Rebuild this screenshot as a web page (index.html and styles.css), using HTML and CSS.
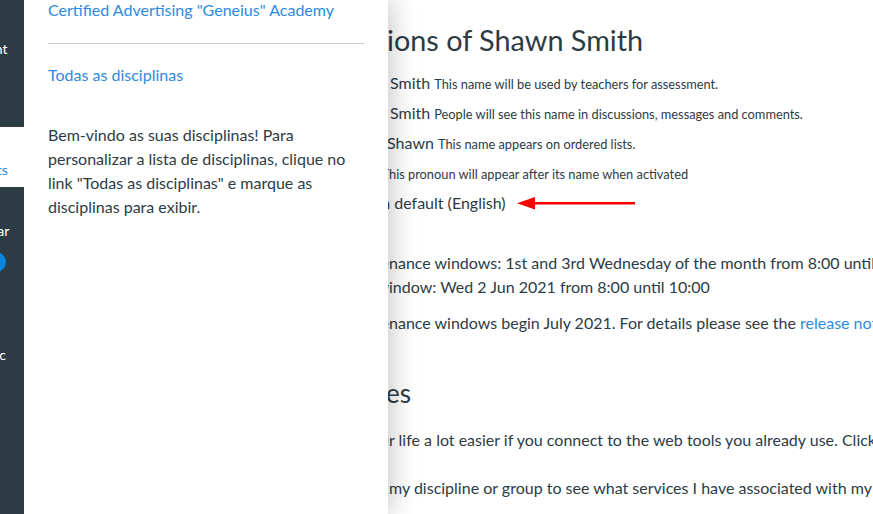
FILE: index.html
```html
<!DOCTYPE html>
<html lang="en">
<head>
<meta charset="utf-8">
<title>Configurations of Shawn Smith</title>
<link rel="stylesheet" href="styles.css">
</head>
<body>
<div class="page">
  <nav class="nav">
    <a class="nav-item account">Account</a>
    <a class="nav-item">Dash</a>
    <a class="nav-item active">Subjects</a>
    <a class="nav-item">Calendar</a>
    <a class="nav-item inbox">Inbox<span class="badge"></span></a>
    <a class="nav-item graphic">Graphic</a>
  </nav>
  <main class="main">
    <h1 class="title"><span class="lead w-title">Configurat</span>ions of Shawn Smith</h1>
    <p class="row"><span class="lead w-a">Full name: Shawn </span>Smith <small>This name will be used by teachers for assessment.</small></p>
    <p class="row"><span class="lead w-a">Display name: Shawn </span>Smith <small>People will see this name in discussions, messages and comments.</small></p>
    <p class="row"><span class="lead w-b">Sort name: Smith, </span>Shawn <small>This name appears on ordered lists.</small></p>
    <p class="row"><small><span class="lead w-c">Pronouns: T</span>his pronoun will appear after its name when activated</small></p>
    <p class="row lang"><span class="lead w-d">Language: Syste</span>m default (English)<svg class="arrow" width="120" height="14" viewBox="0 0 120 14" aria-hidden="true"><path d="M18 6h100v2.4H18z" fill="#f00"/><path d="M0 7.2 18 1v12.4z" fill="#f00"/></svg></p>
    <p class="line first"><span class="lead w-e">Mainte</span>nance windows: 1st and 3rd Wednesday of the month from 8:00 until 10:00</p>
    <p class="line"><span class="lead w-f">Next w</span>indow: Wed 2 Jun 2021 from 8:00 until 10:00</p>
    <p class="line gap"><span class="lead w-e">Mainte</span>nance windows begin July 2021. For details please see the <a class="link">release notes</a></p>
    <h2 class="subtitle"><span class="lead w-g">Web servic</span>es</h2>
    <p class="line"><span class="lead w-h">It can make you</span>r life a lot easier if you connect to the web tools you already use. Click any</p>
    <p class="line last"><span class="lead w-i">Search </span>my discipline or group to see what services I have associated with my account</p>
  </main>
  <aside class="tray">
    <a class="tray-link first-link">Certified Advertising "Geneius" Academy</a>
    <hr class="rule">
    <a class="tray-link">Todas as disciplinas</a>
    <p class="welcome">Bem-vindo as suas disciplinas! Para personalizar a lista de disciplinas, clique no link "Todas as disciplinas" e marque as disciplinas para exibir.</p>
  </aside>
</div>
</body>
</html>
```

FILE: styles.css
```css
* { box-sizing: border-box; }
html, body { margin: 0; height: 100%; }
body {
  overflow: hidden;
  background: #fff;
  color: #2d3b45;
  font-family: Lato, "Open Sans", sans-serif;
  font-size: 16px;
}
.page {
  position: relative;
  display: flex;
  height: 514px;
  overflow: hidden;
}
.nav {
  flex: none;
  width: 84px;
  margin-left: -60px;
  padding-top: 5px;
  display: flex;
  flex-direction: column;
  gap: 1px;
  background: #2d3b45;
}
.nav-item {
  position: relative;
  display: flex;
  align-items: flex-end;
  justify-content: center;
  height: 60px;
  padding-bottom: 9px;
  color: #fff;
  font-size: 14px;
  line-height: 16px;
}
.nav-item.account { padding-bottom: 8px; }
.nav-item.active { background: #fff; color: #2d8ae0; }
.nav-item.graphic { margin-top: 2px; }
.badge {
  position: absolute;
  left: 46px;
  top: 3px;
  width: 20px;
  height: 20px;
  border-radius: 50%;
  background: #0a84dc;
}
.main {
  flex: none;
  width: 900px;
  padding-left: 150px;
  white-space: nowrap;
}
.lead {
  display: inline-block;
  text-align: right;
  white-space: pre;
}
.w-title { width: 213px; }
.w-a { width: 216px; }
.w-b { width: 213px; }
.w-c { width: 215px; }
.w-d { width: 203px; }
.w-e { width: 215px; }
.w-f { width: 215px; }
.w-g { width: 212px; }
.w-h { width: 215px; }
.w-i { width: 215px; }
.title {
  margin: 22px 0 0;
  font-size: 28.8px;
  font-weight: 400;
  line-height: 36px;
}
.row {
  margin: 0;
  height: 30px;
  line-height: 30px;
}
.title + .row { margin-top: 10px; }
.row small { font-size: 12.8px; }
.lang { display: flex; align-items: center; }
.arrow { flex: none; margin-left: 11px; }
.line {
  margin: 0;
  line-height: 24px;
}
.line.first { margin-top: 33px; }
.line.gap { margin-top: 12px; }
.line.last { margin-top: 24px; }
.link { color: #2d8ae0; }
.subtitle {
  margin: 40px 0 17px;
  font-size: 26px;
  font-weight: 400;
  line-height: 36px;
}
.tray {
  position: absolute;
  left: 24px;
  top: 0;
  bottom: 0;
  width: 364px;
  padding: 0 24px;
  background: #fff;
  box-shadow: 0 0 28px rgba(0, 0, 0, .28);
  clip-path: inset(0 -60px 0 0);
}
.tray-link {
  display: block;
  color: #2d8ae0;
  line-height: 24px;
}
.first-link { margin-top: -2px; }
.rule {
  margin: 21px 0 19px;
  border: 0;
  border-top: 1px solid #c7cdd1;
}
.welcome {
  margin: 36px 0 0;
  line-height: 24px;
}
```
